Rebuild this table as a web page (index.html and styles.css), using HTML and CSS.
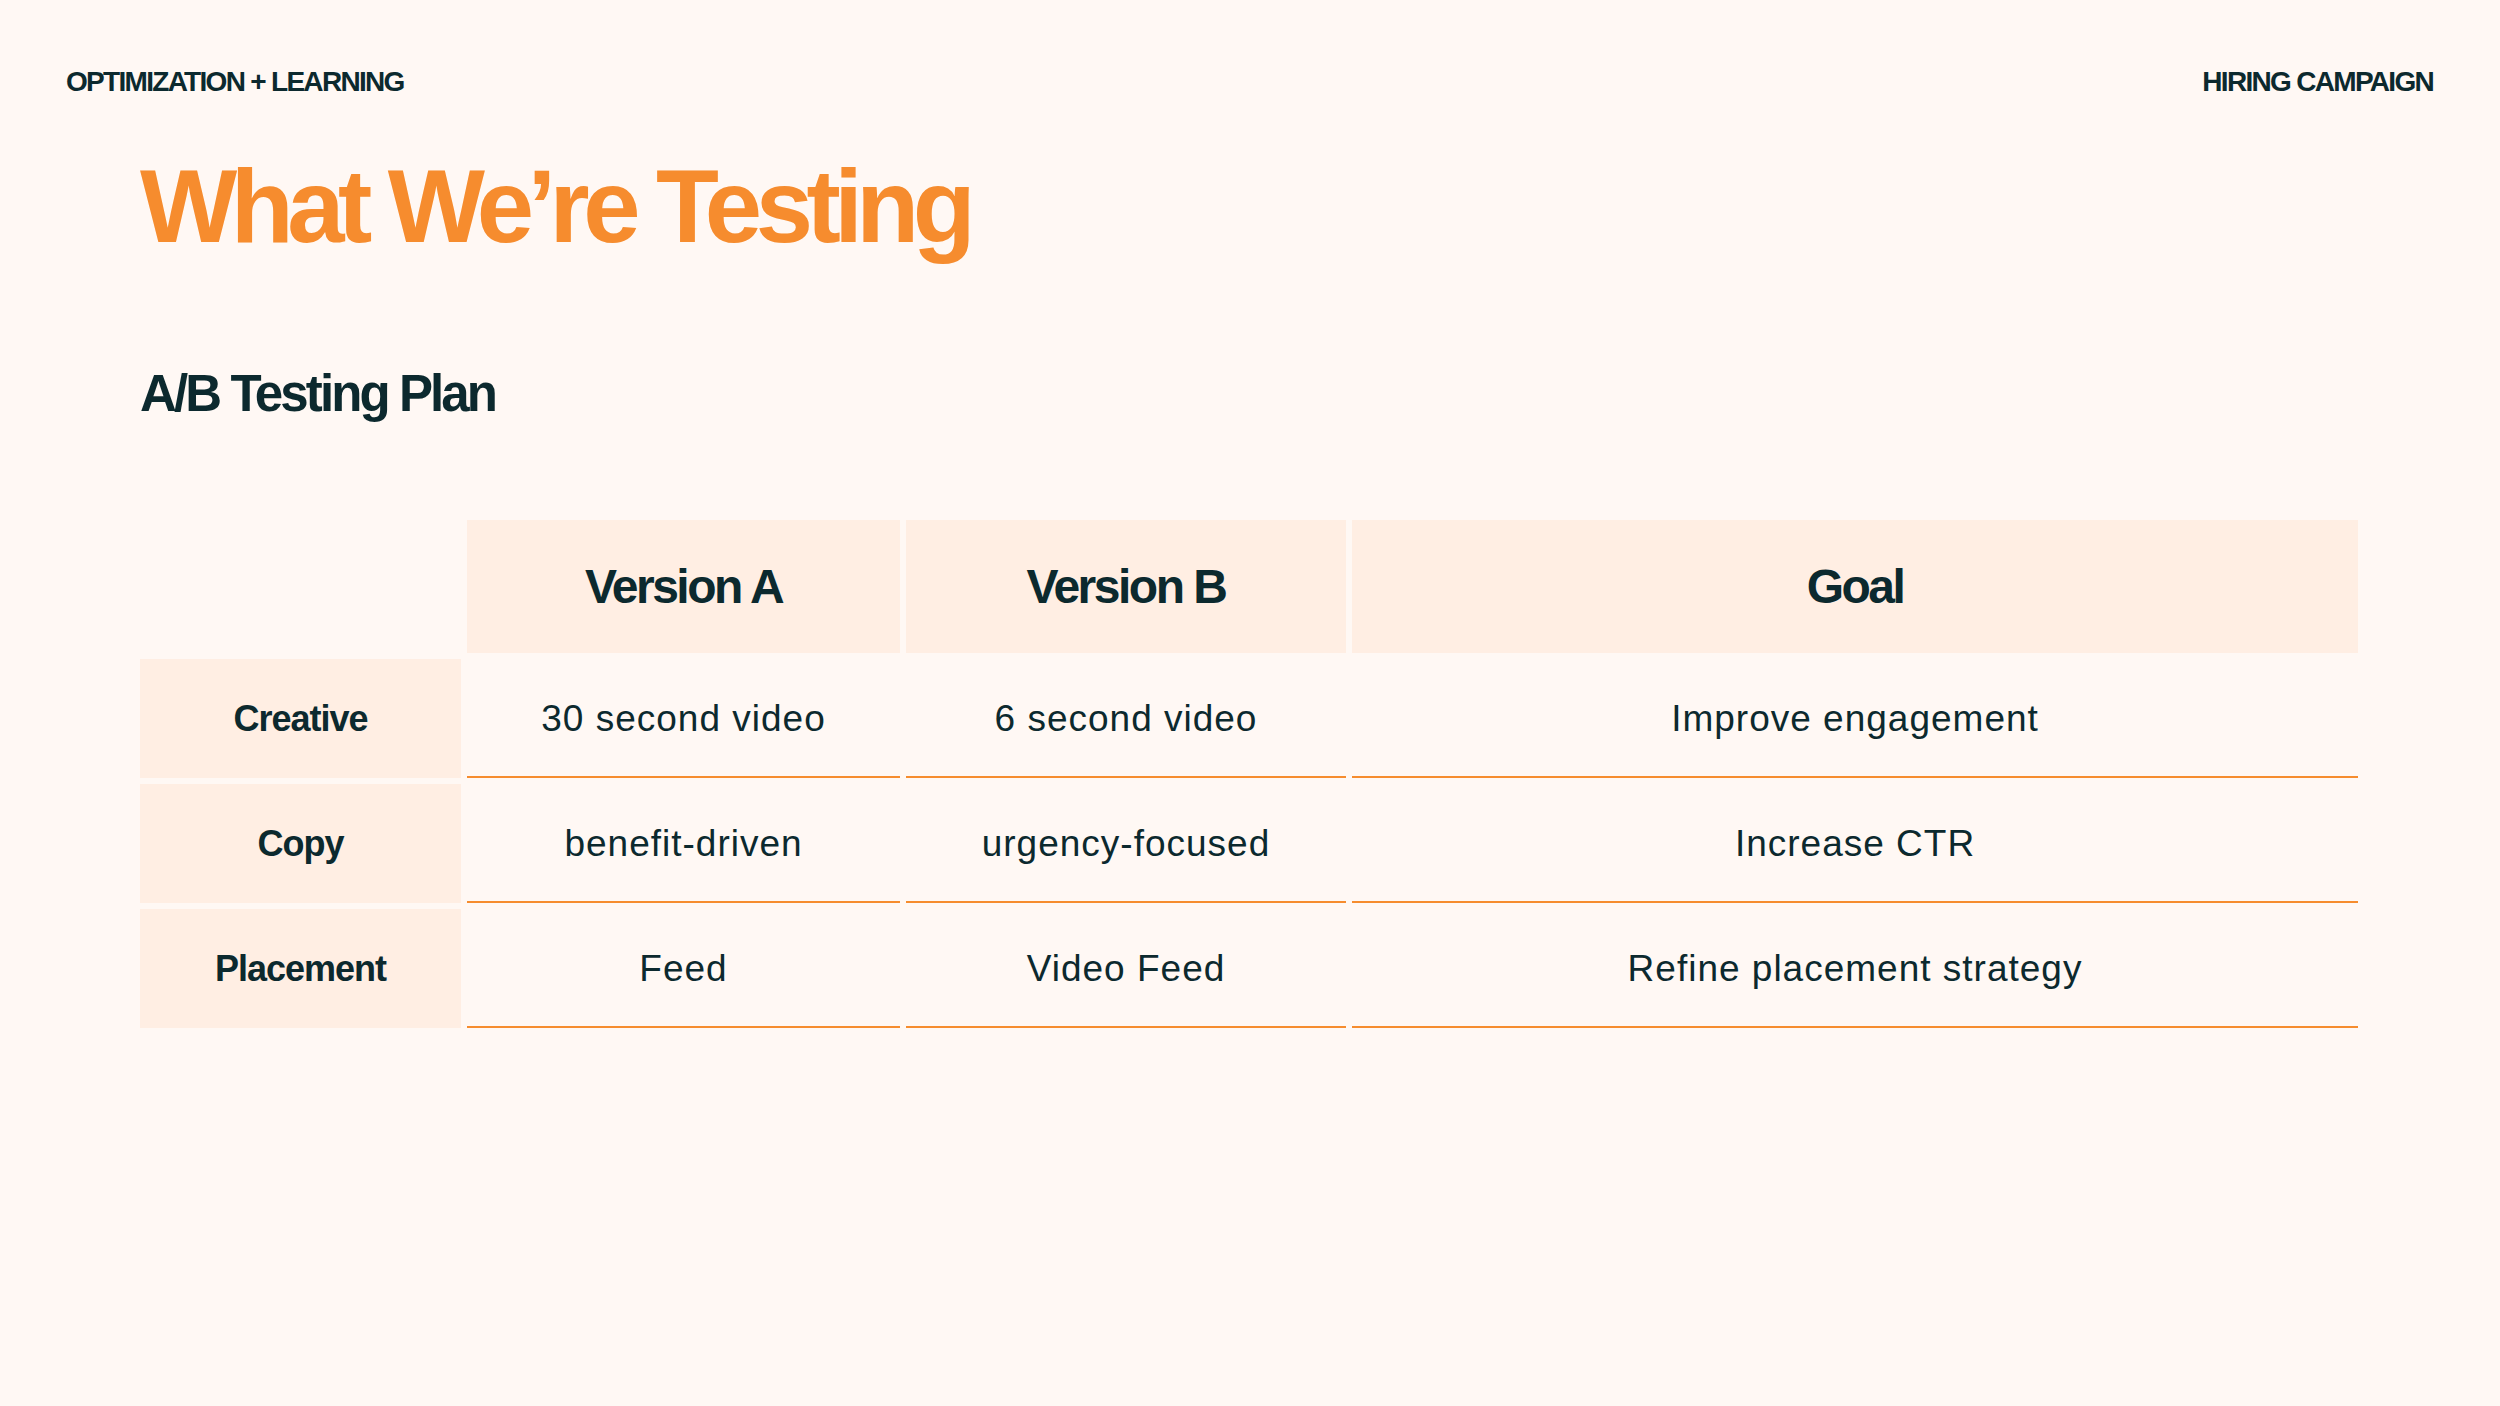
FILE: index.html
```html
<!DOCTYPE html>
<html lang="en">
<head>
<meta charset="utf-8">
<title>What We're Testing</title>
<link rel="stylesheet" href="styles.css">
</head>
<body>
<div class="slide">
  <header class="topbar">
    <span class="tag">OPTIMIZATION + LEARNING</span>
    <span class="tag">HIRING CAMPAIGN</span>
  </header>
  <main class="content">
    <h1 class="title">What We’re Testing</h1>
    <h2 class="subtitle">A/B Testing Plan</h2>
    <div class="table">
      <div class="cell empty"></div>
      <div class="cell head">Version A</div>
      <div class="cell head">Version B</div>
      <div class="cell head">Goal</div>

      <div class="cell label">Creative</div>
      <div class="cell data">30 second video</div>
      <div class="cell data">6 second video</div>
      <div class="cell data">Improve engagement</div>

      <div class="cell label">Copy</div>
      <div class="cell data">benefit-driven</div>
      <div class="cell data">urgency-focused</div>
      <div class="cell data">Increase CTR</div>

      <div class="cell label">Placement</div>
      <div class="cell data">Feed</div>
      <div class="cell data">Video Feed</div>
      <div class="cell data">Refine placement strategy</div>
    </div>
  </main>
</div>
</body>
</html>
```

FILE: styles.css
```css
html, body {
  margin: 0;
  padding: 0;
  background: #fff8f4;
}

.slide {
  width: 2500px;
  height: 1406px;
  box-sizing: border-box;
  background: #fff8f4;
  color: #0c292e;
  font-family: "Liberation Sans", Arial, sans-serif;
  overflow: hidden;
}

.topbar {
  display: flex;
  justify-content: space-between;
  padding: 68px 67px 0 66px;
}

.tag {
  font-size: 28px;
  line-height: 28px;
  font-weight: 700;
  letter-spacing: -1.7px;
  color: #0c292e;
}

.content {
  padding: 0 0 0 140px;
}

.title {
  margin: 59px 0 0 0;
  font-size: 103px;
  line-height: 103px;
  font-weight: 700;
  letter-spacing: -6.5px;
  color: #f68c2e;
}

.subtitle {
  margin: 110px 0 0 0;
  font-size: 51px;
  line-height: 51px;
  font-weight: 700;
  letter-spacing: -2.9px;
  color: #0c292e;
}

.table {
  margin-top: 101px;
  display: grid;
  grid-template-columns: 321px 433px 440px 1006px;
  grid-template-rows: 133px 119px 119px 119px;
  column-gap: 6px;
  row-gap: 6px;
}

.cell {
  display: flex;
  align-items: center;
  justify-content: center;
  box-sizing: border-box;
  text-align: center;
}

.head {
  background: #ffeee3;
  font-size: 48px;
  font-weight: 700;
  letter-spacing: -2.5px;
}

.label {
  background: #ffeee3;
  font-size: 36px;
  font-weight: 700;
  letter-spacing: -1px;
}

.data {
  border-bottom: 2px solid #f68c2e;
  padding-top: 2px;
  font-size: 37px;
  font-weight: 400;
  letter-spacing: 1px;
}
```
